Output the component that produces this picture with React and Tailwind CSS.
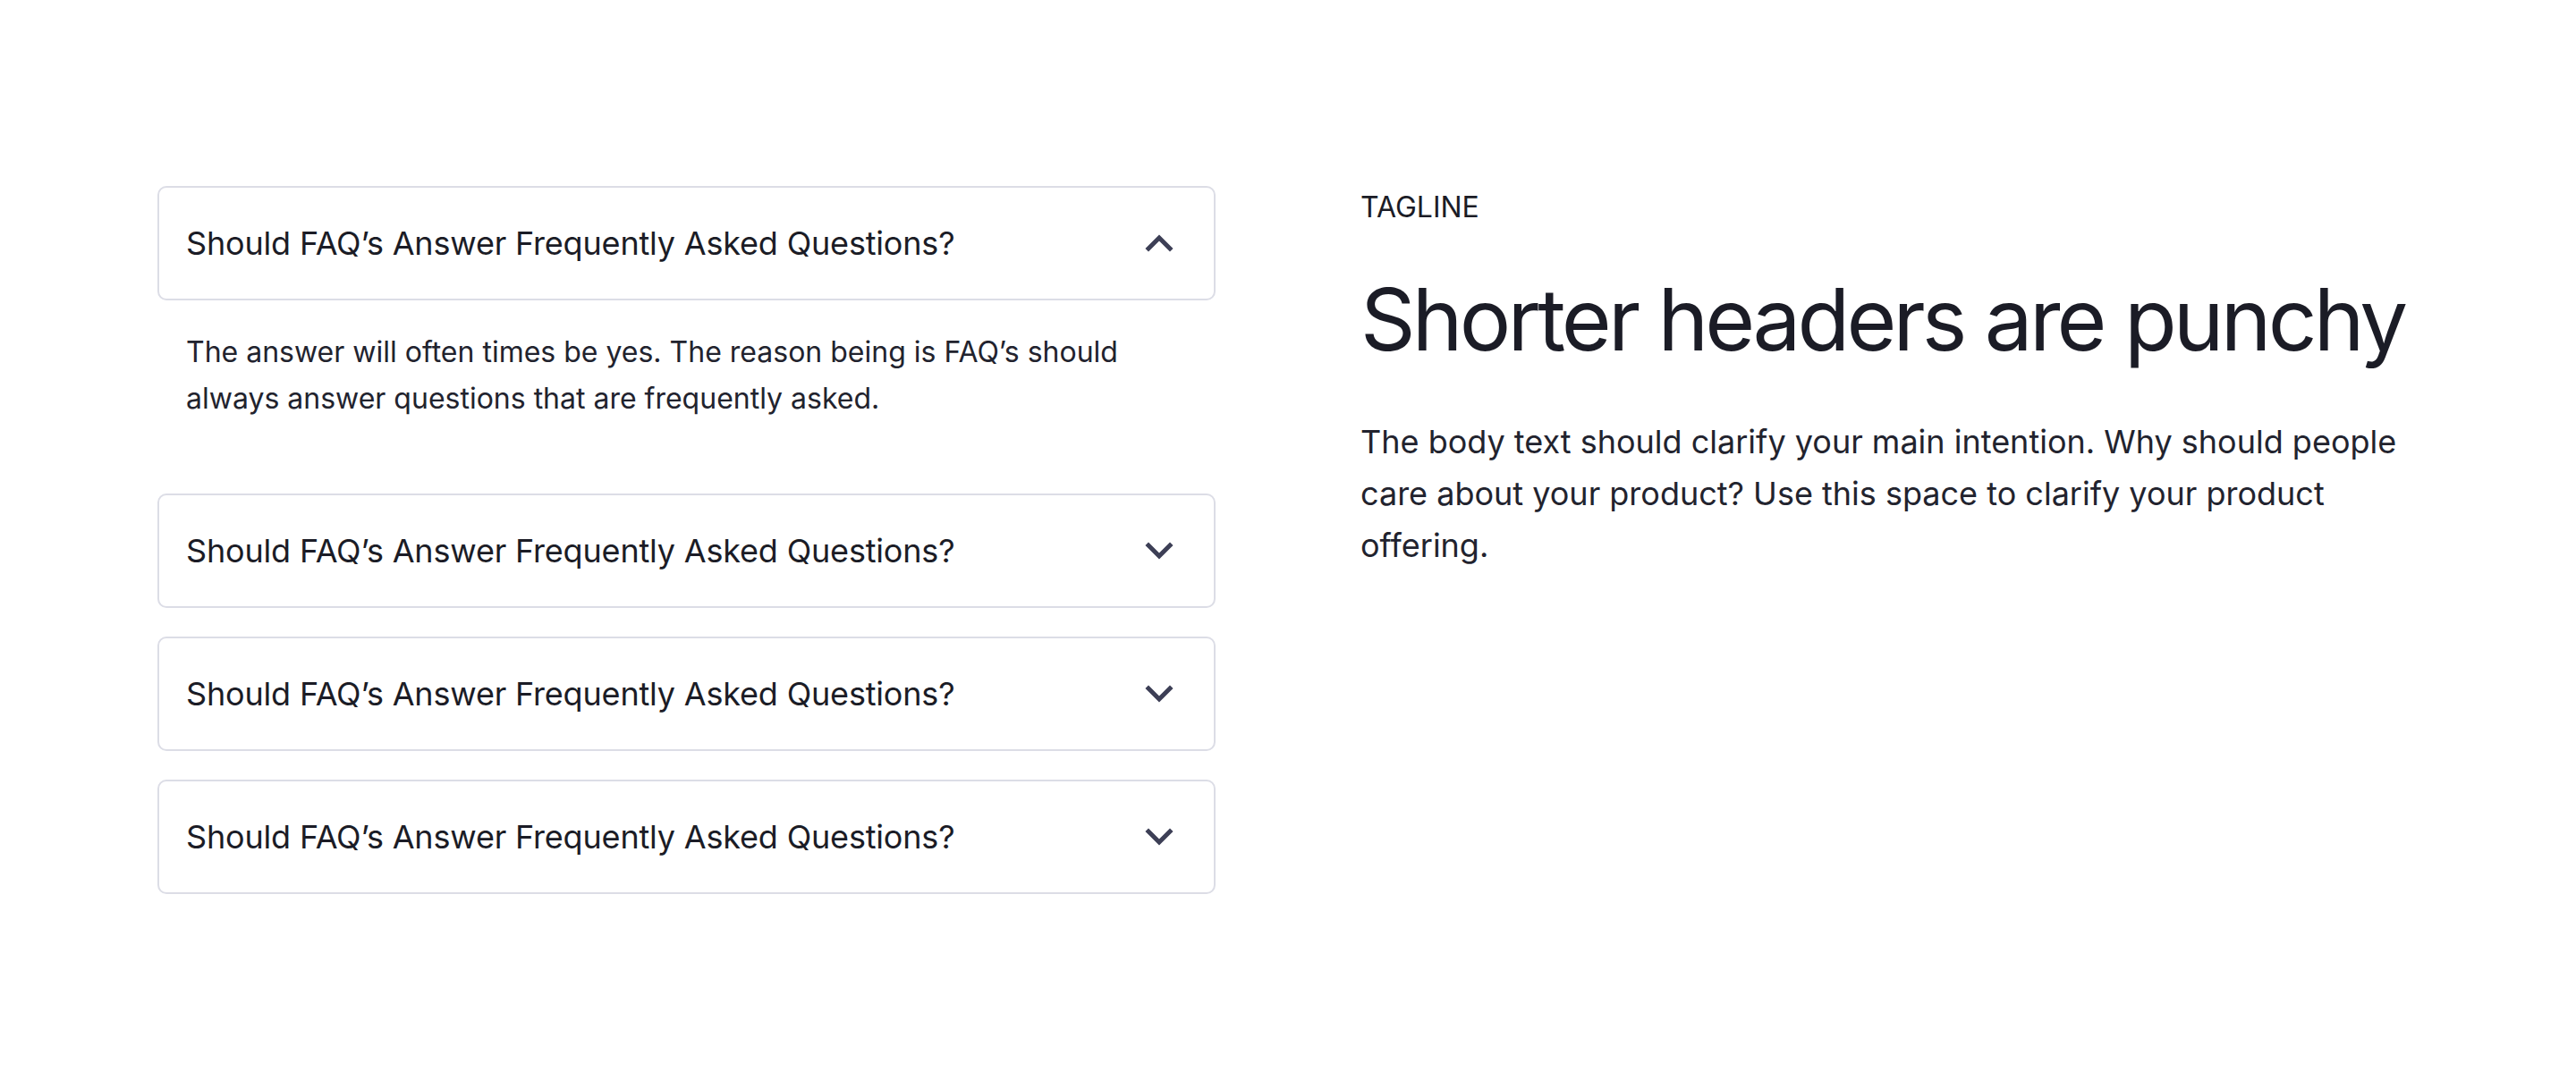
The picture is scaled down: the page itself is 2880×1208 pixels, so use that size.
import React, { useState } from "react";

const faqs = [
  {
    q: "Should FAQ’s Answer Frequently Asked Questions?",
    a: "The answer will often times be yes. The reason being is FAQ’s should always answer questions that are frequently asked.",
  },
  {
    q: "Should FAQ’s Answer Frequently Asked Questions?",
    a: "The answer will often times be yes. The reason being is FAQ’s should always answer questions that are frequently asked.",
  },
  {
    q: "Should FAQ’s Answer Frequently Asked Questions?",
    a: "The answer will often times be yes. The reason being is FAQ’s should always answer questions that are frequently asked.",
  },
  {
    q: "Should FAQ’s Answer Frequently Asked Questions?",
    a: "The answer will often times be yes. The reason being is FAQ’s should always answer questions that are frequently asked.",
  },
];

const Chevron = ({ up }) => (
  <svg
    width="34"
    height="22"
    viewBox="0 0 34 22"
    fill="none"
    stroke="#3d3f56"
    strokeWidth="5"
    strokeLinecap="square"
    strokeLinejoin="miter"
  >
    {up ? <path d="M5 17 L17 5 L29 17" /> : <path d="M5 5 L17 17 L29 5" />}
  </svg>
);

const App = () => {
  const [open, setOpen] = useState(0);

  return (
    <div
      className="min-h-screen bg-white text-[#1b1c26]"
      style={{ fontFamily: "Inter, 'Noto Sans', sans-serif" }}
    >
      <div className="grid grid-cols-2 gap-[162px] px-[176px] pt-[208px] pb-[200px]">
        {/* FAQ accordion */}
        <div className="flex flex-col gap-8">
          {faqs.map((item, i) => (
            <div key={i}>
              <button
                onClick={() => setOpen(open === i ? -1 : i)}
                className="flex h-[128px] w-full items-center justify-between rounded-[10px] border-2 border-[#dcdde6] bg-white pl-[30px] pr-[44px] text-left"
              >
                <span className="text-[36px] leading-[1.5] tracking-[-0.005em]">{item.q}</span>
                <Chevron up={open === i} />
              </button>
              {open === i && (
                <p className="px-8 pt-8 pb-12 text-[32px] leading-[52px] text-[#22232e]">
                  {item.a}
                </p>
              )}
            </div>
          ))}
        </div>

        {/* Copy block */}
        <div>
          <p className="text-[32px] leading-[1.5]">TAGLINE</p>
          <h1 className="mt-11 whitespace-nowrap text-[96px] leading-[1.2] tracking-[-0.04em] text-[#1b1c26]">
            Shorter headers are punchy
          </h1>
          <p className="mt-[50px] text-[36px] leading-[58px] text-[#22232e]">
            The body text should clarify your main intention. Why should people care about your
            product? Use this space to clarify your product offering.
          </p>
        </div>
      </div>
    </div>
  );
};

export default App;
